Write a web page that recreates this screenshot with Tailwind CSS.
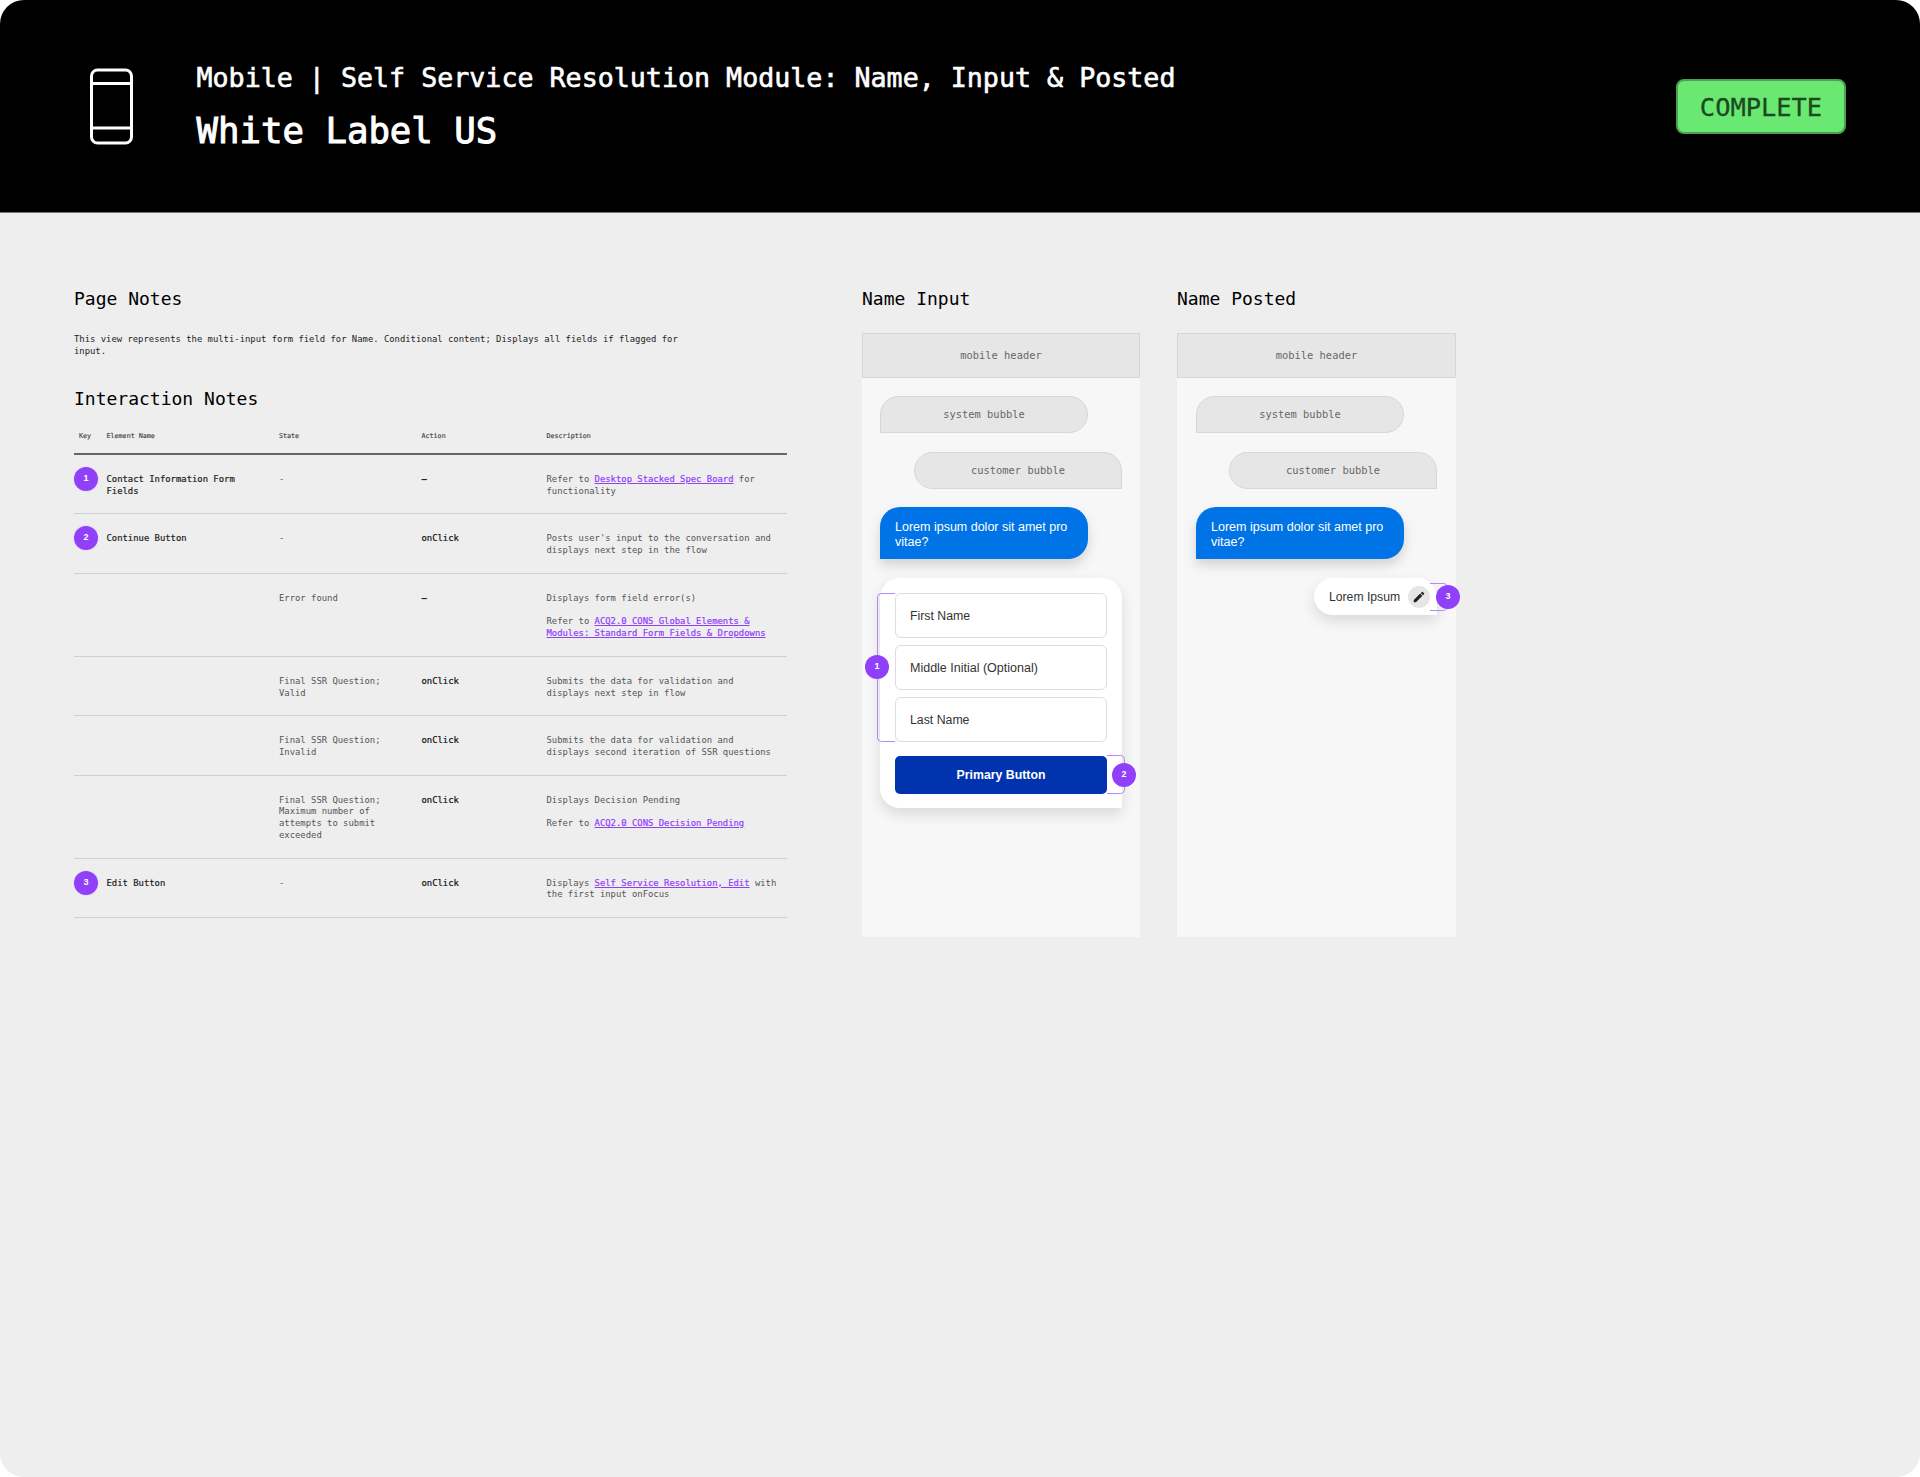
<!DOCTYPE html>
<html lang="en">
<head>
<meta charset="utf-8">
<title>Name Input and Posted</title>
<script src="https://cdn.jsdelivr.net/npm/@tailwindcss/browser@4"></script>
</head>
<body class="bg-white">
<div class="h-[1477px] w-[1920px] overflow-hidden rounded-[24px] bg-[#eeeeee] font-['DejaVu_Sans_Mono',monospace] text-black">
  <header class="flex h-[213px] items-center border-b border-[#777] bg-black pl-[89px] pr-[74px] text-white">
    <svg class="h-[77px] w-[45px] shrink-0" viewBox="0 0 45 77" fill="none" stroke="white" stroke-width="3">
      <rect x="2.5" y="2" width="40" height="73" rx="6"/>
      <path d="M2.5 15.5H42.5M2.5 60H42.5"/>
    </svg>
    <div class="ml-[62.5px] flex-1">
      <div class="pt-[1px] text-[26.67px] leading-[36px] [-webkit-text-stroke:0.6px_white]">Mobile | Self Service Resolution Module: Name, Input &amp; Posted</div>
      <div class="mt-[12px] pt-[1px] text-[35.7px] leading-[44px] [-webkit-text-stroke:1px_white]">White Label US</div>
    </div>
    <div class="flex h-[55px] w-[170px] items-center justify-center rounded-[8px] border-2 border-[#4f9e55] bg-[#69e971] pt-[3px] text-[25.4px] text-[#1c4a20] [-webkit-text-stroke:0.3px_#1c4a20]">COMPLETE</div>
  </header>

  <main class="flex gap-[75px] px-[74px] pt-[74px]">
    <section class="w-[713px]">
      <h2 class="text-[18px] leading-[24px]">Page Notes</h2>
      <p class="mt-[22px] w-[620px] text-[8.9px] leading-[12px] text-[#222]">This view represents the multi-input form field for Name. Conditional content; Displays all fields if flagged for<br>input.</p>
      <h2 class="mt-[30px] text-[18px] leading-[24px]">Interaction Notes</h2>

      <div class="mt-[19px] grid grid-cols-[32.5px_172.5px_142.5px_125px_1fr] border-b-2 border-[#666] pb-[11px] text-[6.7px] leading-[12px] text-[#444] [-webkit-text-stroke:0.15px_#444]">
        <div class="pl-[5px]">Key</div><div>Element Name</div><div>State</div><div>Action</div><div>Description</div>
      </div>

      <div class="text-[8.9px] leading-[11.8px] text-[#555]">
        <div class="grid grid-cols-[32.5px_172.5px_142.5px_125px_1fr] border-b border-[#d0d0d0] pt-[19px] pb-[15.8px]">
          <div class="-mt-[7px]"><span class="flex h-[24px] w-[24px] items-center justify-center rounded-full bg-[#9140fa] font-['Liberation_Sans',sans-serif] text-[9px] font-bold text-white shadow-[0_0_0_1px_#e8e0f6]">1</span></div>
          <div class="text-[#222] [-webkit-text-stroke:0.2px_#222]">Contact Information Form<br>Fields</div><div>-</div><div class="font-bold text-[#222]">–</div>
          <div>Refer to <a class="text-[#9140fa] underline [-webkit-text-stroke:0.2px_#9140fa]">Desktop Stacked Spec Board</a> for<br>functionality</div>
        </div>
        <div class="grid grid-cols-[32.5px_172.5px_142.5px_125px_1fr] border-b border-[#d0d0d0] pt-[19px] pb-[15.8px]">
          <div class="-mt-[7px]"><span class="flex h-[24px] w-[24px] items-center justify-center rounded-full bg-[#9140fa] font-['Liberation_Sans',sans-serif] text-[9px] font-bold text-white shadow-[0_0_0_1px_#e8e0f6]">2</span></div>
          <div class="text-[#222] [-webkit-text-stroke:0.2px_#222]">Continue Button</div><div>-</div><div class="text-[#111] [-webkit-text-stroke:0.2px_#111]">onClick</div>
          <div>Posts user's input to the conversation and<br>displays next step in the flow</div>
        </div>
        <div class="grid grid-cols-[32.5px_172.5px_142.5px_125px_1fr] border-b border-[#d0d0d0] pt-[19px] pb-[15.8px]">
          <div></div><div></div><div>Error found</div><div class="font-bold text-[#222]">–</div>
          <div>Displays form field error(s)<br><br>Refer to <a class="text-[#9140fa] underline [-webkit-text-stroke:0.2px_#9140fa]">ACQ2.0 CONS Global Elements &amp;<br>Modules: Standard Form Fields &amp; Dropdowns</a></div>
        </div>
        <div class="grid grid-cols-[32.5px_172.5px_142.5px_125px_1fr] border-b border-[#d0d0d0] pt-[19px] pb-[15.8px]">
          <div></div><div></div><div>Final SSR Question;<br>Valid</div><div class="text-[#111] [-webkit-text-stroke:0.2px_#111]">onClick</div>
          <div>Submits the data for validation and<br>displays next step in flow</div>
        </div>
        <div class="grid grid-cols-[32.5px_172.5px_142.5px_125px_1fr] border-b border-[#d0d0d0] pt-[19px] pb-[15.8px]">
          <div></div><div></div><div>Final SSR Question;<br>Invalid</div><div class="text-[#111] [-webkit-text-stroke:0.2px_#111]">onClick</div>
          <div>Submits the data for validation and<br>displays second iteration of SSR questions</div>
        </div>
        <div class="grid grid-cols-[32.5px_172.5px_142.5px_125px_1fr] border-b border-[#d0d0d0] pt-[19px] pb-[15.8px]">
          <div></div><div></div><div>Final SSR Question;<br>Maximum number of<br>attempts to submit<br>exceeded</div><div class="text-[#111] [-webkit-text-stroke:0.2px_#111]">onClick</div>
          <div>Displays Decision Pending<br><br>Refer to <a class="text-[#9140fa] underline [-webkit-text-stroke:0.2px_#9140fa]">ACQ2.0 CONS Decision Pending</a></div>
        </div>
        <div class="grid grid-cols-[32.5px_172.5px_142.5px_125px_1fr] border-b border-[#d0d0d0] pt-[19px] pb-[15.8px]">
          <div class="-mt-[7px]"><span class="flex h-[24px] w-[24px] items-center justify-center rounded-full bg-[#9140fa] font-['Liberation_Sans',sans-serif] text-[9px] font-bold text-white shadow-[0_0_0_1px_#e8e0f6]">3</span></div>
          <div class="text-[#222] [-webkit-text-stroke:0.2px_#222]">Edit Button</div><div>-</div><div class="text-[#111] [-webkit-text-stroke:0.2px_#111]">onClick</div>
          <div>Displays <a class="text-[#9140fa] underline [-webkit-text-stroke:0.2px_#9140fa]">Self Service Resolution, Edit</a> with<br>the first input onFocus</div>
        </div>
      </div>
    </section>

    <div class="flex gap-[37px]">
      <!-- Name Input -->
      <section class="w-[278px]">
        <h2 class="text-[18px] leading-[24px]">Name Input</h2>
        <div class="mt-[22px] flex h-[604px] flex-col bg-[#f7f7f7]">
          <div class="flex h-[45px] items-center justify-center border border-[#d6d6d6] bg-[#e6e6e6] text-[10.4px] text-[#666]">mobile header</div>
          <div class="flex flex-col px-[18px] pt-[18px]">
            <div class="flex h-[37px] w-[208px] items-center justify-center rounded-[20px] rounded-bl-none border border-[#d6d6d6] bg-[#e6e6e6] text-[10.4px] text-[#666]">system bubble</div>
            <div class="mt-[19px] flex h-[37px] w-[208px] items-center justify-center self-end rounded-[20px] rounded-br-none border border-[#d6d6d6] bg-[#e6e6e6] text-[10.4px] text-[#666]">customer bubble</div>
            <div class="mt-[18px] flex h-[52px] w-[208px] items-center rounded-[20px] rounded-bl-none bg-[#0073e6] px-[15px] pt-[3px] font-['Liberation_Sans',sans-serif] text-[12.5px] leading-[15px] text-white shadow-[0_6px_12px_rgba(0,0,0,0.15)]">Lorem ipsum dolor sit amet pro<br>vitae?</div>
            <div class="relative mt-[19px] flex flex-col rounded-[20px] rounded-br-none bg-white px-[15px] pt-[15px] pb-[14px] font-['Liberation_Sans',sans-serif] text-[12.3px] text-[#333] shadow-[0_6px_14px_rgba(0,0,0,0.12)]">
              <div class="flex h-[45px] items-center rounded-[6px] border-[1.5px] border-[#dddddd] px-[14px] pt-[2px]">First Name</div>
              <div class="mt-[7px] flex h-[45px] items-center rounded-[6px] border-[1.5px] border-[#dddddd] px-[14px] pt-[2px] text-[12.5px]">Middle Initial (Optional)</div>
              <div class="mt-[7px] flex h-[45px] items-center rounded-[6px] border-[1.5px] border-[#dddddd] px-[14px] pt-[2px]">Last Name</div>
              <div class="mt-[14px] flex h-[38px] items-center justify-center rounded-[5px] bg-[#0033ad] pt-[1px] font-bold text-white">Primary Button</div>
              <div class="absolute top-[15px] left-[-3px] h-[149px] w-[18px] rounded-l-[5px] border-y-[1.5px] border-l-[1.5px] border-[#b388ff]"></div>
              <span class="absolute top-[77px] left-[-15px] flex h-[24px] w-[24px] items-center justify-center rounded-full bg-[#9140fa] text-[9px] font-bold text-white">1</span>
              <div class="absolute top-[177px] right-[-3px] h-[39px] w-[18px] rounded-r-[5px] border-y-[1.5px] border-r-[1.5px] border-[#b388ff]"></div>
              <span class="absolute top-[185px] right-[-14px] flex h-[24px] w-[24px] items-center justify-center rounded-full bg-[#9140fa] text-[9px] font-bold text-white">2</span>
            </div>
          </div>
        </div>
      </section>

      <!-- Name Posted -->
      <section class="w-[279px]">
        <h2 class="text-[18px] leading-[24px]">Name Posted</h2>
        <div class="mt-[22px] flex h-[604px] flex-col bg-[#f7f7f7]">
          <div class="flex h-[45px] items-center justify-center border border-[#d6d6d6] bg-[#e6e6e6] text-[10.4px] text-[#666]">mobile header</div>
          <div class="flex flex-col px-[19px] pt-[18px]">
            <div class="flex h-[37px] w-[208px] items-center justify-center rounded-[20px] rounded-bl-none border border-[#d6d6d6] bg-[#e6e6e6] text-[10.4px] text-[#666]">system bubble</div>
            <div class="mt-[19px] flex h-[37px] w-[208px] items-center justify-center self-end rounded-[20px] rounded-br-none border border-[#d6d6d6] bg-[#e6e6e6] text-[10.4px] text-[#666]">customer bubble</div>
            <div class="mt-[18px] flex h-[52px] w-[208px] items-center rounded-[20px] rounded-bl-none bg-[#0073e6] px-[15px] pt-[3px] font-['Liberation_Sans',sans-serif] text-[12.5px] leading-[15px] text-white shadow-[0_6px_12px_rgba(0,0,0,0.15)]">Lorem ipsum dolor sit amet pro<br>vitae?</div>
            <div class="relative mt-[19px] flex h-[37px] w-[123px] items-center self-end rounded-full rounded-br-none bg-white pt-[2px] pl-[15px] font-['Liberation_Sans',sans-serif] text-[12.2px] text-[#333] shadow-[0_6px_14px_rgba(0,0,0,0.12)]">
              Lorem Ipsum
              <span class="absolute top-[8px] right-[7px] flex h-[22px] w-[22px] items-center justify-center rounded-full bg-[#e6e6e6]">
                <svg class="h-[14px] w-[14px]" viewBox="0 0 24 24" fill="#222"><path d="M3 17.25V21h3.75L17.81 9.94l-3.75-3.75L3 17.25zM20.71 7.04c.39-.39.39-1.02 0-1.41l-2.34-2.34c-.39-.39-1.02-.39-1.41 0l-1.83 1.83 3.75 3.75 1.83-1.83z"/></svg>
              </span>
              <div class="absolute top-[5px] right-[-11px] h-[28px] w-[18px] rounded-r-[5px] border-y-[1.5px] border-r-[1.5px] border-[#b388ff]"></div>
              <span class="absolute top-[7px] right-[-23px] flex h-[24px] w-[24px] items-center justify-center rounded-full bg-[#9140fa] text-[9px] font-bold text-white">3</span>
            </div>
          </div>
        </div>
      </section>
    </div>
  </main>
</div>
</body>
</html>
